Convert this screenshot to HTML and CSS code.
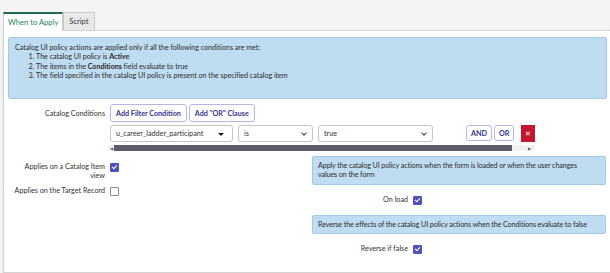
FILE: index.html
```html
<!DOCTYPE html>
<html lang="en">
<head>
    <meta charset="UTF-8">
    <meta name="viewport" content="width=device-width, initial-scale=1.0">
    <title>Catalog UI Policy</title>
    <link rel="stylesheet" href="styles.css">
</head>
<body>
    <div class="tabs">
        <div class="tab active">When to Apply</div>
        <div class="tab">Script</div>
    </div>

    <div class="panel">
        <div class="notice notice-main">
            Catalog UI policy actions are applied only if all the following conditions are met:
            <ol>
                <li>The catalog UI policy is <b>Active</b></li>
                <li>The items in the <b>Conditions</b> field evaluate to true</li>
                <li>The field specified in the catalog UI policy is present on the specified catalog item</li>
            </ol>
        </div>

        <div class="conditions">
            <div class="field-label">Catalog Conditions</div>
            <div class="condition-body">
                <div class="filter-actions">
                    <button class="btn-outline">Add Filter Condition</button>
                    <button class="btn-outline">Add "OR" Clause</button>
                </div>
                <div class="condition-scroll">
                    <div class="condition-row">
                        <div class="select select-field">u_career_ladder_participant <span class="caret-solid"></span></div>
                        <div class="select select-op">is <span class="chev"></span></div>
                        <div class="select select-value">true <span class="chev"></span></div>
                        <div class="row-buttons">
                            <button class="btn-small">AND</button>
                            <button class="btn-small">OR</button>
                            <button class="btn-delete">&#x2715;</button>
                        </div>
                    </div>
                    <div class="fake-scrollbar">
                        <span class="arrow">&#9664;</span>
                        <span class="thumb"></span>
                        <span class="arrow arrow-right">&#9654;</span>
                    </div>
                </div>
            </div>
        </div>

        <div class="columns">
            <div class="column">
                <div class="check-row">
                    <div class="field-label">Applies on a Catalog Item view</div>
                    <span class="checkbox checked"></span>
                </div>
                <div class="check-row">
                    <div class="field-label">Applies on the Target Record</div>
                    <span class="checkbox"></span>
                </div>
            </div>
            <div class="column column-right">
                <div class="notice">Apply the catalog UI policy actions when the form is loaded or when the user changes values on the form</div>
                <div class="check-row">
                    <div class="field-label">On load</div>
                    <span class="checkbox checked"></span>
                </div>
                <div class="notice">Reverse the effects of the catalog UI policy actions when the Conditions evaluate to false</div>
                <div class="check-row">
                    <div class="field-label">Reverse if false</div>
                    <span class="checkbox checked"></span>
                </div>
            </div>
        </div>
    </div>
</body>
</html>
```

FILE: styles.css
```css
body {
    margin: 0;
    background-color: #f4f4f5;
    font-family: Lato, "Open Sans", sans-serif;
    font-size: 7.2px;
    color: #2e2e2e;
}
.tabs {
    display: flex;
    padding: 12px 0 0 3px;
}
.tab {
    height: 17px;
    line-height: 17px;
    padding: 0 5px;
    background-color: #e9e9ea;
    border: 1px solid #c9c9cc;
    border-bottom: none;
    font-size: 7.6px;
    color: #333;
}
.tab.active {
    background-color: #ffffff;
    border-top: 2px solid #1d6b4c;
    color: #23875b;
    position: relative;
    top: 1px;
    margin-top: -1px;
    padding: 0 4px;
}
.panel {
    margin-left: 3px;
    height: 235px;
    background-color: #ffffff;
    border: 1px solid #d3d3d6;
    border-right: none;
    padding: 6px 3px 0 4px;
    box-shadow: 0 1px 2px rgba(0,0,0,0.15);
}
.notice {
    background-color: #bfdcf1;
    border: 1px solid #9fcbea;
    border-radius: 2px;
    padding: 4px 10px 4px 5px;
    line-height: 9.3px;
    letter-spacing: -0.12px;
}
.notice-main {
    height: 50px;
    padding: 5px 6px;
    letter-spacing: -0.05px;
}
.notice ol {
    margin: 0;
    padding-left: 21px;
}
.field-label {
    width: 97px;
    text-align: right;
    color: #333;
    line-height: 9px;
}
.conditions {
    display: flex;
    gap: 5px;
    margin-top: 5px;
}
.conditions > .field-label {
    padding-top: 5px;
}
.filter-actions {
    display: flex;
    gap: 2px;
}
.btn-outline {
    font-family: inherit;
    font-size: 7.2px;
    font-weight: bold;
    color: #34348c;
    background-color: #ffffff;
    border: 1px solid #b6b6e4;
    border-radius: 3px;
    height: 18px;
    padding: 0 5px;
}
.condition-scroll {
    width: 427px;
    margin-top: 3px;
    margin-left: -2px;
    overflow: hidden;
}
.condition-row {
    display: flex;
    gap: 5px;
    height: 17px;
    width: 440px;
    padding-left: 2px;
}
.select {
    border: 1px solid #c6c6c6;
    border-radius: 3px;
    padding: 0 5px;
    line-height: 15px;
    position: relative;
    color: #333;
}
.select-field { width: 111px; }
.select-op { width: 63px; }
.select-value { width: 103px; }
.caret-solid {
    position: absolute;
    right: 8px;
    top: 7px;
    border-left: 3px solid transparent;
    border-right: 3px solid transparent;
    border-top: 3px solid #222;
}
.chev {
    position: absolute;
    right: 6px;
    top: 5px;
    width: 3px;
    height: 3px;
    border-right: 1px solid #444;
    border-bottom: 1px solid #444;
    transform: rotate(45deg);
}
.row-buttons {
    display: flex;
    gap: 2px;
    margin-left: 28px;
}
.btn-small {
    font-family: inherit;
    font-size: 7.2px;
    font-weight: bold;
    color: #34348c;
    background-color: #ffffff;
    border: 1px solid #b6b6e4;
    border-radius: 3px;
    height: 16px;
    padding: 0 4px;
}
.btn-delete {
    margin-left: 5px;
    width: 18px;
    height: 17px;
    border: none;
    background-color: #c2182e;
    color: #ffffff;
    font-size: 7px;
    text-align: left;
    padding: 0 0 0 4px;
}
.fake-scrollbar {
    display: flex;
    align-items: center;
    height: 6px;
    margin-top: 3px;
    background-color: #f1f1f1;
}
.arrow {
    font-size: 4px;
    color: #555;
    width: 6px;
    text-align: center;
}
.thumb {
    width: 398px;
    height: 6px;
    background-color: #5c5c68;
}
.arrow-right {
    margin-left: auto;
    margin-right: 3px;
}
.columns {
    display: flex;
    margin-top: 5px;
}
.column {
    width: 304px;
}
.column .field-label {
    width: 91px;
    padding-left: 6px;
}
.column-right {
    width: 294px;
}
.check-row {
    display: flex;
    gap: 5px;
    margin-top: 6px;
    margin-bottom: 6px;
}
.column-right .field-label {
    width: 96px;
    padding-left: 0;
}
.column-right .check-row {
    margin: 10px 0;
}
.checkbox {
    width: 7px;
    height: 7px;
    border: 1px solid #8a8a8a;
    border-radius: 1px;
    margin-top: 1px;
    position: relative;
}
.checkbox.checked {
    background-color: #4f51bd;
    border-color: #4f51bd;
}
.checkbox.checked::after {
    content: "";
    position: absolute;
    left: 2px;
    top: 0;
    width: 2px;
    height: 4px;
    border-right: 1px solid #ffffff;
    border-bottom: 1px solid #ffffff;
    transform: rotate(45deg);
}
```
